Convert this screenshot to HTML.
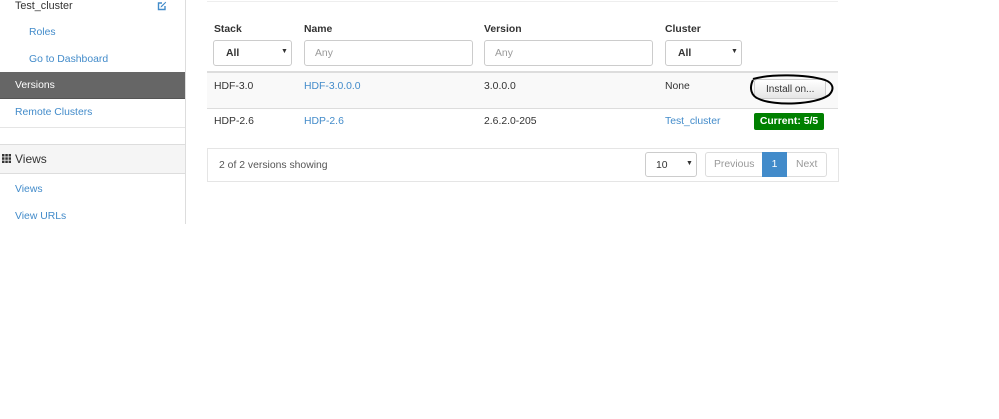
<!DOCTYPE html>
<html><head><style>
body{margin:0;width:999px;height:419px;background:#fff;font-family:"Liberation Sans",sans-serif;font-size:10.4px;color:#333;position:relative;overflow:hidden}
.a{position:absolute;white-space:nowrap}
.lnk{color:#428bca}
.b{font-weight:bold}
.box{position:absolute;border:1px solid #ccc;border-radius:3px;background:#fff;box-sizing:border-box}
</style></head><body>
<div class="a" style="left:185px;top:0;width:1px;height:224px;background:#ddd"></div>
<div class="a" style="left:0;top:127px;width:185px;height:1px;background:#e5e5e5"></div>
<div class="a" style="left:15px;top:0px;font-size:10.8px">Test_cluster</div>
<svg class="a" style="left:157px;top:1px" width="10" height="10" viewBox="0 0 10 10"><path d="M8 5v3.5H1.5V2H5" fill="none" stroke="#428bca" stroke-width="1.4"/><path d="M3.5 6.5L4 5 8.5 0.8 9.2 1.5 4.8 6z" fill="#428bca"/></svg>
<div class="a lnk" style="left:29px;top:27px">Roles</div>
<div class="a lnk" style="left:29px;top:54px">Go to Dashboard</div>
<div class="a" style="left:0;top:72px;width:185px;height:26px;background:#666;border-bottom:1px solid #555"></div>
<div class="a" style="left:15px;top:80px;color:#fff">Versions</div>
<div class="a lnk" style="left:15px;top:107px">Remote Clusters</div>
<div class="a" style="left:0;top:144px;width:185px;height:28px;background:#f5f5f5;border-top:1px solid #ddd;border-bottom:1px solid #ddd"></div>
<svg class="a" style="left:2px;top:154px" width="9" height="9"><g fill="#333"><rect x="0" y="0" width="2.5" height="2.5"/><rect x="3.3" y="0" width="2.5" height="2.5"/><rect x="6.6" y="0" width="2.5" height="2.5"/><rect x="0" y="3.3" width="2.5" height="2.5"/><rect x="3.3" y="3.3" width="2.5" height="2.5"/><rect x="6.6" y="3.3" width="2.5" height="2.5"/><rect x="0" y="6.6" width="2.5" height="2.5"/><rect x="3.3" y="6.6" width="2.5" height="2.5"/><rect x="6.6" y="6.6" width="2.5" height="2.5"/></g></svg>
<div class="a" style="left:15px;top:152px;font-size:12px">Views</div>
<div class="a lnk" style="left:15px;top:184px">Views</div>
<div class="a lnk" style="left:15px;top:211px">View URLs</div>
<div class="a" style="left:207px;top:1px;width:631px;height:1px;background:#eee"></div>
<div class="a b" style="left:214px;top:24px">Stack</div>
<div class="a b" style="left:304px;top:24px">Name</div>
<div class="a b" style="left:484px;top:24px">Version</div>
<div class="a b" style="left:665px;top:24px">Cluster</div>
<div class="box" style="left:213px;top:40px;width:79px;height:26px"><span class="a b" style="left:12px;top:7px">All</span><span class="a" style="left:67px;top:7px;font-size:7px">▼</span></div>
<div class="box" style="left:304px;top:40px;width:169px;height:26px"><span class="a" style="left:10px;top:7px;color:#999">Any</span></div>
<div class="box" style="left:484px;top:40px;width:169px;height:26px"><span class="a" style="left:10px;top:7px;color:#999">Any</span></div>
<div class="box" style="left:665px;top:40px;width:77px;height:26px"><span class="a b" style="left:12px;top:7px">All</span><span class="a" style="left:65px;top:7px;font-size:7px">▼</span></div>
<div class="a" style="left:207px;top:71px;width:631px;height:35px;background:#f9f9f9;border-top:2px solid #ddd;border-bottom:1px solid #ddd"></div>
<div class="a" style="left:214px;top:81px">HDF-3.0</div>
<div class="a lnk" style="left:304px;top:81px">HDF-3.0.0.0</div>
<div class="a" style="left:484px;top:81px">3.0.0.0</div>
<div class="a" style="left:665px;top:81px">None</div>
<div class="a" style="left:754px;top:79px;width:72px;height:20px;border:1px solid #ccc;border-radius:3px;background:linear-gradient(#fff,#e6e6e6);box-sizing:border-box"><span class="a" style="left:11px;top:4px;font-size:10px">Install on...</span></div>
<svg class="a" style="left:745px;top:72px" width="92" height="36"><path d="M8 7C25 2 60 2 80 8 88 11 90 17 84 23 70 33 30 34 14 27 6 24 4 16 8 8" fill="none" stroke="#000" stroke-width="2"/></svg>
<div class="a" style="left:214px;top:116px">HDP-2.6</div>
<div class="a lnk" style="left:304px;top:116px">HDP-2.6</div>
<div class="a" style="left:484px;top:116px">2.6.2.0-205</div>
<div class="a lnk" style="left:665px;top:116px">Test_cluster</div>
<div class="a b" style="left:754px;top:113px;width:70px;height:17px;background:#008000;color:#fff;border-radius:2px;text-align:center;line-height:17px;font-size:10.4px">Current: 5/5</div>
<div class="a" style="left:207px;top:148px;width:632px;height:34px;border:1px solid #e5e5e5;box-sizing:border-box"></div>
<div class="a" style="left:219px;top:160px;color:#555">2 of 2 versions showing</div>
<div class="box" style="left:645px;top:152px;width:52px;height:25px"><span class="a" style="left:10px;top:7px">10</span><span class="a" style="left:40px;top:7px;font-size:7px">▼</span></div>
<div class="box" style="left:705px;top:152px;width:122px;height:25px;border-color:#ddd"></div>
<div class="a" style="left:714px;top:159px;color:#999">Previous</div>
<div class="a" style="left:762px;top:152px;width:25px;height:25px;background:#428bca;color:#fff;text-align:center;line-height:25px">1</div>
<div class="a" style="left:796px;top:159px;color:#999">Next</div>
</body></html>
